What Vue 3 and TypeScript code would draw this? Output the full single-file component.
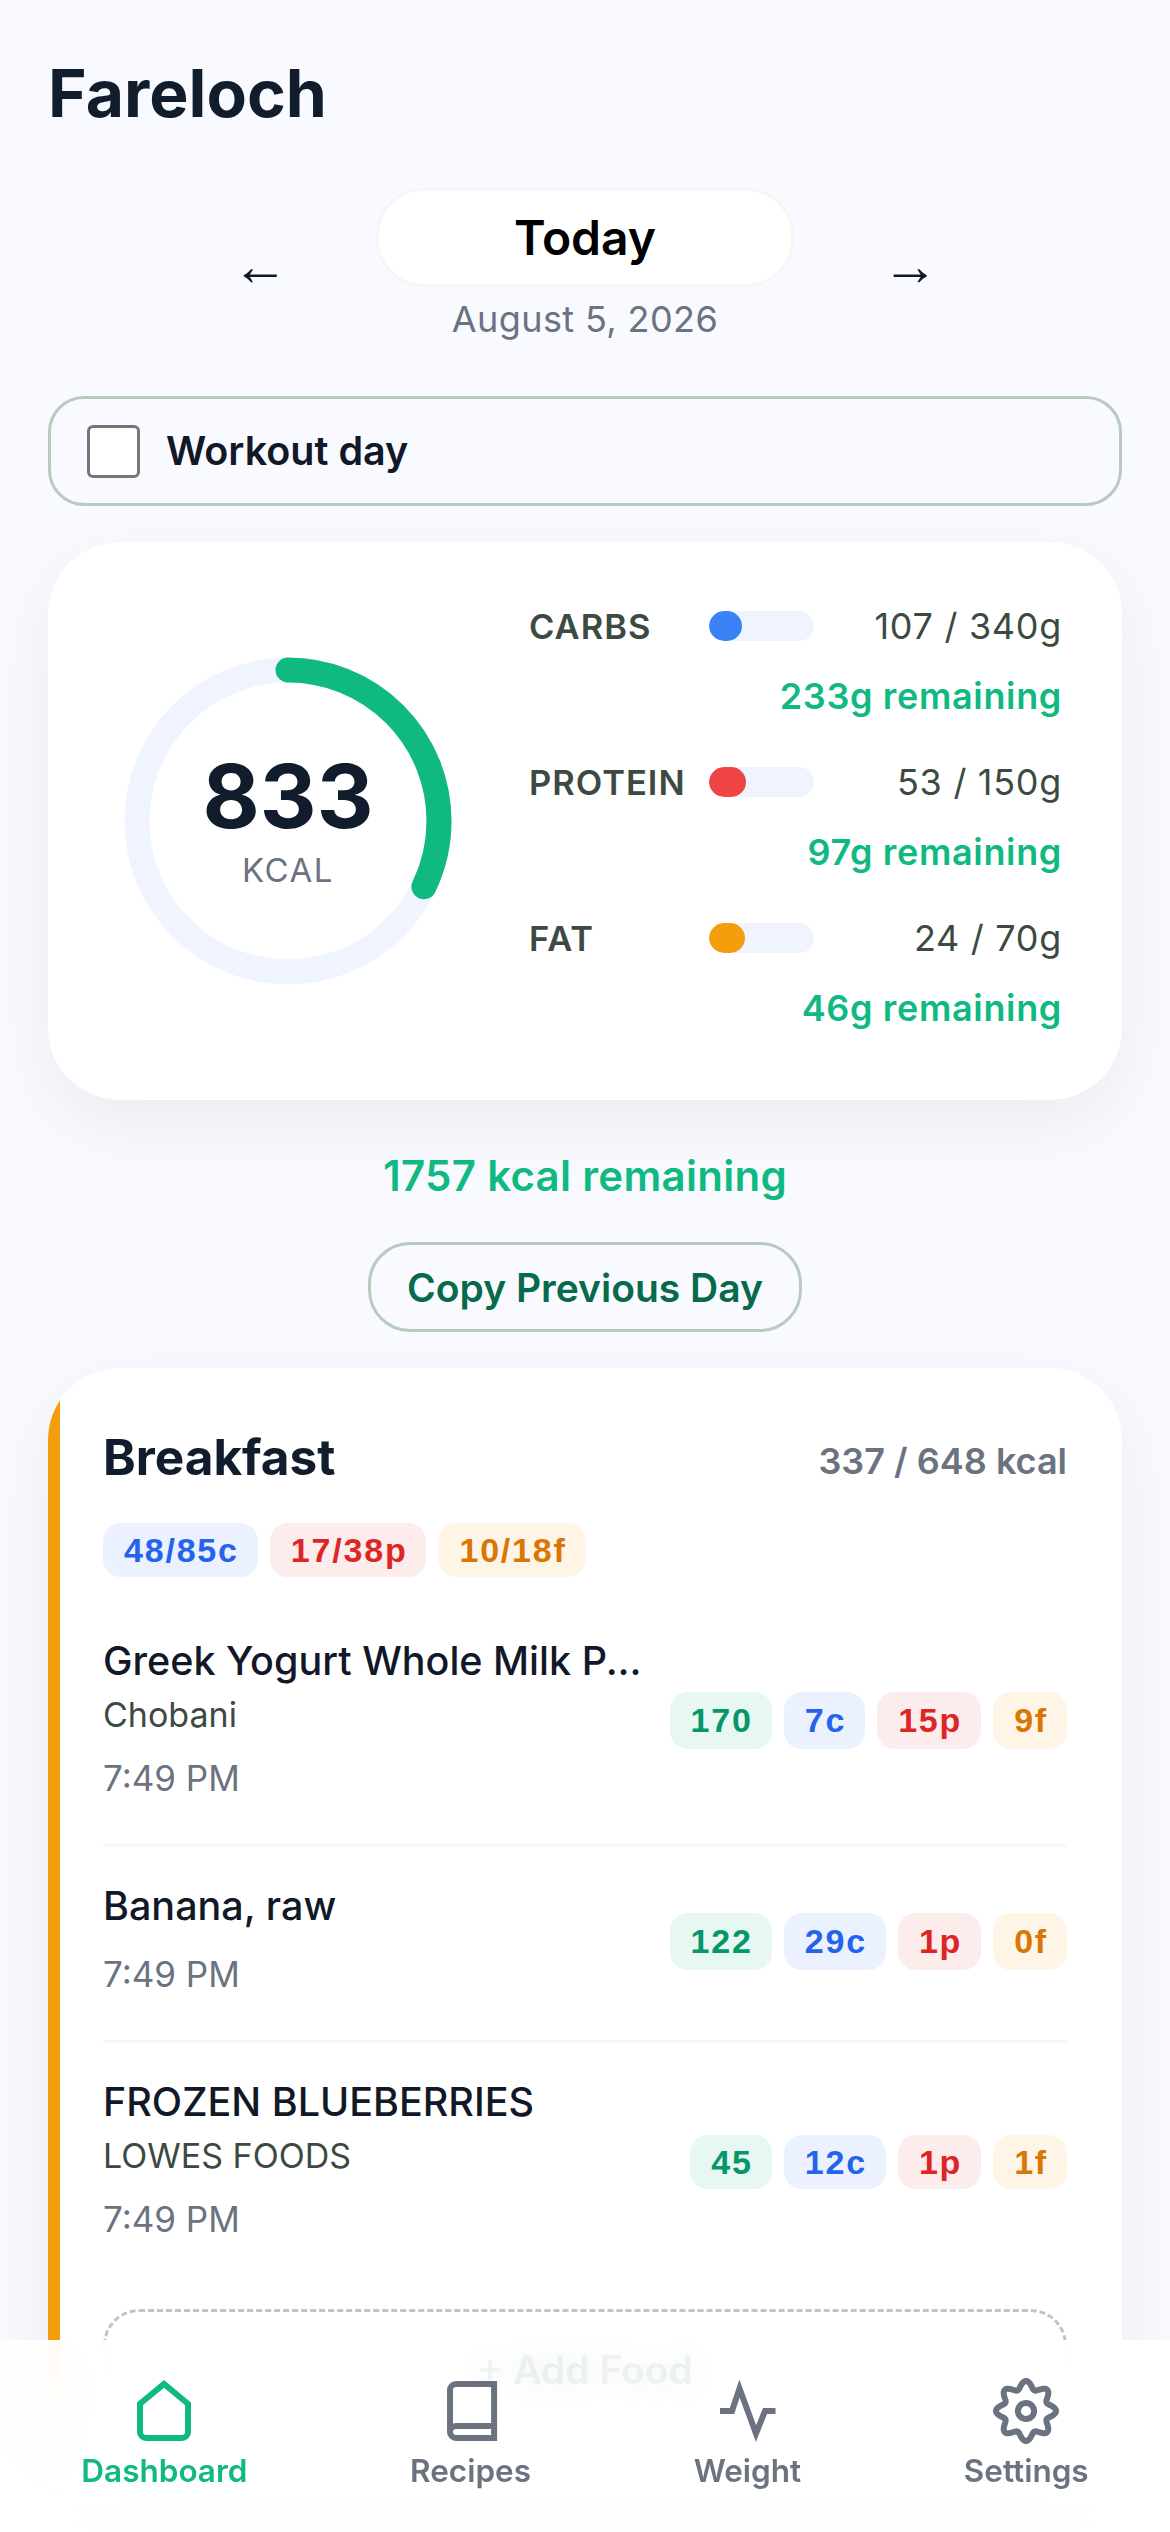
<script setup lang="ts">
const macros = [
  { name: "CARBS", value: "107 / 340g", left: "233g remaining", pct: 31.5, color: "#3b82f6" },
  { name: "PROTEIN", value: "53 / 150g", left: "97g remaining", pct: 35.3, color: "#ef4444" },
  { name: "FAT", value: "24 / 70g", left: "46g remaining", pct: 34.3, color: "#f59e0b" },
];

const foods = [
  { name: "Greek Yogurt Whole Milk P...", brand: "Chobani", time: "7:49 PM", kcal: 170, c: "7c", p: "15p", f: "9f" },
  { name: "Banana, raw", brand: "", time: "7:49 PM", kcal: 122, c: "29c", p: "1p", f: "0f" },
  { name: "FROZEN BLUEBERRIES", brand: "LOWES FOODS", time: "7:49 PM", kcal: 45, c: "12c", p: "1p", f: "1f" },
];

const navItems = ["Dashboard", "Recipes", "Weight", "Settings"];

// ring: 833 of 2590 kcal
const ringRadius = 151;
const ringLength = 2 * Math.PI * ringRadius;
const ringDash = `${(833 / 2590) * ringLength} ${ringLength}`;

// 8 lobed gear outline
const gearPath = (() => {
  const pts: string[] = [];
  for (let i = 0; i < 160; i++) {
    const a = (i / 160) * Math.PI * 2;
    const r = 8.7 + 1.3 * Math.cos(8 * a);
    const x = 12 + r * Math.sin(a);
    const y = 12 - r * Math.cos(a);
    pts.push(`${x.toFixed(2)} ${y.toFixed(2)}`);
  }
  return `M${pts.join("L")}Z`;
})();
</script>

<template>
  <div class="page">
    <h1 class="brand-title">Fareloch</h1>

    <div class="date-nav">
      <button class="arrow">←</button>
      <div class="date-mid">
        <div class="today">Today</div>
        <div class="date-text">August 5, 2026</div>
      </div>
      <button class="arrow">→</button>
    </div>

    <label class="workout">
      <span class="check"></span>
      <span>Workout day</span>
    </label>

    <section class="summary">
      <div class="ring">
        <svg width="330" height="330" viewBox="0 0 330 330">
          <circle cx="165" cy="165" :r="ringRadius" fill="none" stroke="#eff4ff" stroke-width="25" />
          <circle
            cx="165"
            cy="165"
            :r="ringRadius"
            fill="none"
            stroke="#10b981"
            stroke-width="25"
            stroke-linecap="round"
            :stroke-dasharray="ringDash"
            transform="rotate(-90 165 165)"
          />
        </svg>
        <div class="ring-text">
          <div class="ring-num">833</div>
          <div class="ring-unit">KCAL</div>
        </div>
      </div>
      <div class="macros">
        <div v-for="m in macros" :key="m.name" class="macro">
          <div class="macro-top">
            <span class="macro-name">{{ m.name }}</span>
            <span class="bar"><span class="bar-fill" :style="{ width: m.pct + '%', background: m.color }"></span></span>
            <span class="macro-val">{{ m.value }}</span>
          </div>
          <div class="macro-left">{{ m.left }}</div>
        </div>
      </div>
    </section>

    <div class="kcal-left">1757 kcal remaining</div>

    <div class="copy-wrap">
      <button class="copy">Copy Previous Day</button>
    </div>

    <section class="meal">
      <div class="meal-head">
        <h2>Breakfast</h2>
        <span class="meal-kcal">337 / 648 kcal</span>
      </div>
      <div class="chips meal-chips">
        <span class="chip blue">48/85c</span>
        <span class="chip red">17/38p</span>
        <span class="chip orange">10/18f</span>
      </div>
      <div v-for="food in foods" :key="food.name" class="food">
        <div class="food-info">
          <div class="food-name">{{ food.name }}</div>
          <div v-if="food.brand" class="food-brand">{{ food.brand }}</div>
          <div class="food-time">{{ food.time }}</div>
        </div>
        <div class="chips food-chips">
          <span class="chip green">{{ food.kcal }}</span>
          <span class="chip blue">{{ food.c }}</span>
          <span class="chip red">{{ food.p }}</span>
          <span class="chip orange">{{ food.f }}</span>
        </div>
      </div>
      <button class="add-food"><span class="add-label">+ Add Food</span></button>
    </section>

    <nav class="bottom-nav">
      <div v-for="(item, i) in navItems" :key="item" class="nav-item" :class="{ active: i === 0 }">
        <svg width="72" height="72" viewBox="0 0 24 24" fill="none" stroke="currentColor" stroke-width="2">
          <path v-if="i === 0" d="M4 9.6L12 3l8 6.6V19a2 2 0 0 1-2 2H6a2 2 0 0 1-2-2z" />
          <template v-else-if="i === 1">
            <path d="M5 19a2 2 0 0 1 2-2h12.7V3H7a2 2 0 0 0-2 2z" />
            <path d="M5 19a2 2 0 0 0 2 2h12.7v-4" />
          </template>
          <path v-else-if="i === 2" d="M3 12h4l2.5-7.5 5.5 15 3-7.5h3.5" />
          <template v-else>
            <path :d="gearPath" />
            <circle cx="12" cy="12" r="2.7" />
          </template>
        </svg>
        <span>{{ item }}</span>
      </div>
    </nav>
  </div>
</template>

<style scoped>
.page {
  box-sizing: border-box;
  height: 2532px;
  overflow: hidden;
  padding: 48px 48px 0;
  background: #f8faff;
  font-family: Inter, "Liberation Sans", sans-serif;
  color: #111827;
}

.brand-title {
  margin: 0;
  font-size: 66px;
  line-height: 90px;
  font-weight: 700;
  color: #111c2d;
}

.date-nav {
  display: flex;
  justify-content: center;
  align-items: center;
  gap: 88px;
  margin-top: 50px;
}

.arrow {
  border: none;
  background: none;
  padding: 0;
  font-family: "Liberation Sans", sans-serif;
  font-size: 56px;
  line-height: 60px;
  color: #111827;
}

.date-mid {
  display: flex;
  flex-direction: column;
  align-items: center;
}

.today {
  box-sizing: border-box;
  width: 418px;
  height: 99px;
  display: flex;
  align-items: center;
  justify-content: center;
  border-radius: 48px;
  border: 3px solid #f5f7f5;
  background: #fff;
  font-size: 48px;
  font-weight: 600;
  color: #000;
}

.date-text {
  margin-top: 8px;
  font-size: 36px;
  line-height: 48px;
  letter-spacing: 0.4px;
  color: #6b7280;
}

.workout {
  box-sizing: border-box;
  height: 110px;
  margin-top: 53px;
  display: flex;
  align-items: center;
  gap: 26px;
  padding-left: 36px;
  border: 3px solid #b9cbbf;
  border-radius: 36px;
  font-size: 39.5px;
  font-weight: 600;
}

.check {
  box-sizing: border-box;
  width: 53px;
  height: 53px;
  border: 3px solid #767676;
  border-radius: 6px;
  background: #fff;
}

.summary {
  box-sizing: border-box;
  height: 558px;
  margin-top: 36px;
  display: flex;
  align-items: center;
  padding: 0 60px 0 75px;
  border-radius: 72px;
  background: #fff;
  box-shadow: 0 24px 72px rgba(17, 24, 39, 0.06);
}

.ring {
  position: relative;
  width: 330px;
  height: 330px;
  flex: none;
}

.ring-text {
  position: absolute;
  inset: 0 0 6px;
  display: flex;
  flex-direction: column;
  align-items: center;
  justify-content: center;
}

.ring-num {
  font-size: 88px;
  line-height: 100px;
  font-weight: 700;
  color: #111c2d;
}

.ring-unit {
  margin-top: 4px;
  font-size: 33px;
  line-height: 40px;
  letter-spacing: 1.5px;
  color: #6b7280;
}

.macros {
  flex: 1;
  margin-left: 76px;
  margin-bottom: 8px;
  display: flex;
  flex-direction: column;
  gap: 38px;
}

.macro-top {
  display: flex;
  align-items: center;
  height: 48px;
}

.macro-name {
  width: 180px;
  font-size: 34.5px;
  font-weight: 600;
  letter-spacing: 1px;
  color: #3d4a42;
}

.bar {
  display: block;
  width: 105px;
  height: 30px;
  border-radius: 15px;
  background: #eff4ff;
  overflow: hidden;
}

.bar-fill {
  display: block;
  height: 100%;
  border-radius: 15px;
}

.macro-val {
  margin-left: auto;
  font-size: 36px;
  letter-spacing: 0.7px;
  color: #3d4a42;
}

.macro-left {
  margin-top: 22px;
  text-align: right;
  font-size: 36px;
  line-height: 48px;
  font-weight: 600;
  letter-spacing: 0.65px;
  color: #10b981;
}

.kcal-left {
  margin-top: 50px;
  text-align: center;
  font-size: 42px;
  line-height: 52px;
  font-weight: 600;
  letter-spacing: 0.3px;
  color: #10b981;
}

.copy-wrap {
  display: flex;
  justify-content: center;
  margin-top: 40px;
}

.copy {
  box-sizing: border-box;
  height: 90px;
  padding: 0 36px;
  border: 3px solid #b9cbbf;
  border-radius: 42px;
  background: none;
  font-family: inherit;
  font-size: 39px;
  font-weight: 600;
  color: #066a4b;
}

.meal {
  position: relative;
  overflow: hidden;
  margin-top: 36px;
  padding: 53px 55px 60px 55px;
  border-radius: 72px;
  background: #fff;
  box-shadow: 0 24px 72px rgba(17, 24, 39, 0.06);
}

/* meal colour stripe, clipped by the card corners */
.meal::before {
  content: "";
  position: absolute;
  left: 0;
  top: 0;
  bottom: 0;
  width: 12px;
  background: #f59e0b;
}

.meal-head {
  display: flex;
  justify-content: space-between;
  align-items: center;
}

.meal-head h2 {
  margin: 0;
  font-size: 49.5px;
  line-height: 72px;
  font-weight: 700;
  color: #111c2d;
}

.meal-kcal {
  margin-top: 7px;
  font-size: 36px;
  font-weight: 600;
  color: #6b7280;
}

.chips {
  display: flex;
  gap: 12px;
  flex: none;
}

.meal-chips {
  margin: 30px 0 25px;
}

.food-chips {
  margin-top: 2px;
}

.meal-chips .chip,
.food:last-of-type .chip {
  line-height: 36px;
}

.chip {
  display: flex;
  align-items: center;
  padding: 9px 19px 9px 21px;
  border-radius: 18px;
  font-family: "Liberation Sans", sans-serif;
  font-size: 34px;
  line-height: 39px;
  font-weight: 700;
  letter-spacing: 1.8px;
}

.green { background: #e7f7f1; color: #059669; }
.blue { background: #ebf1fe; color: #2563eb; }
.red { background: #fdecec; color: #dc2626; }
.orange { background: #fef5e7; color: #d97706; }

.food {
  display: flex;
  justify-content: space-between;
  align-items: center;
  padding: 35px 0 42px;
  border-bottom: 3px solid #f6f8f6;
}

.food:last-of-type {
  border-bottom: none;
}

.food-name {
  font-size: 39.5px;
  line-height: 48px;
  font-weight: 500;
}

.food-brand {
  margin-top: 6px;
  font-size: 34px;
  line-height: 48px;
  color: #3d4a42;
}

.food-time {
  margin-top: 15px;
  font-size: 35px;
  line-height: 48px;
  color: #6b7280;
}

.food-name + .food-time {
  margin-top: 20px;
}

.add-food {
  box-sizing: border-box;
  display: block;
  width: 100%;
  height: 120px;
  margin-top: 24px;
  border: 3px dashed #b9cbbf;
  border-radius: 36px;
  background: none;
  font-family: inherit;
  font-size: 39px;
  font-weight: 600;
}

.add-label {
  position: relative;
  z-index: 2;
  color: rgba(6, 106, 75, 0.065);
  text-shadow: 0 0 30px rgba(6, 106, 75, 0.12);
}

.bottom-nav {
  position: fixed;
  z-index: 1;
  left: 0;
  right: 0;
  bottom: 0;
  height: 192px;
  display: flex;
  justify-content: space-around;
  align-items: flex-start;
  padding-top: 35px;
  box-sizing: border-box;
  background: rgba(255, 255, 255, 0.9);
  backdrop-filter: blur(30px);
}

.nav-item {
  display: flex;
  flex-direction: column;
  align-items: center;
  gap: 3px;
  font-size: 31.5px;
  line-height: 42px;
  font-weight: 600;
  color: #6b7280;
}

.nav-item.active {
  color: #10b981;
}
</style>
